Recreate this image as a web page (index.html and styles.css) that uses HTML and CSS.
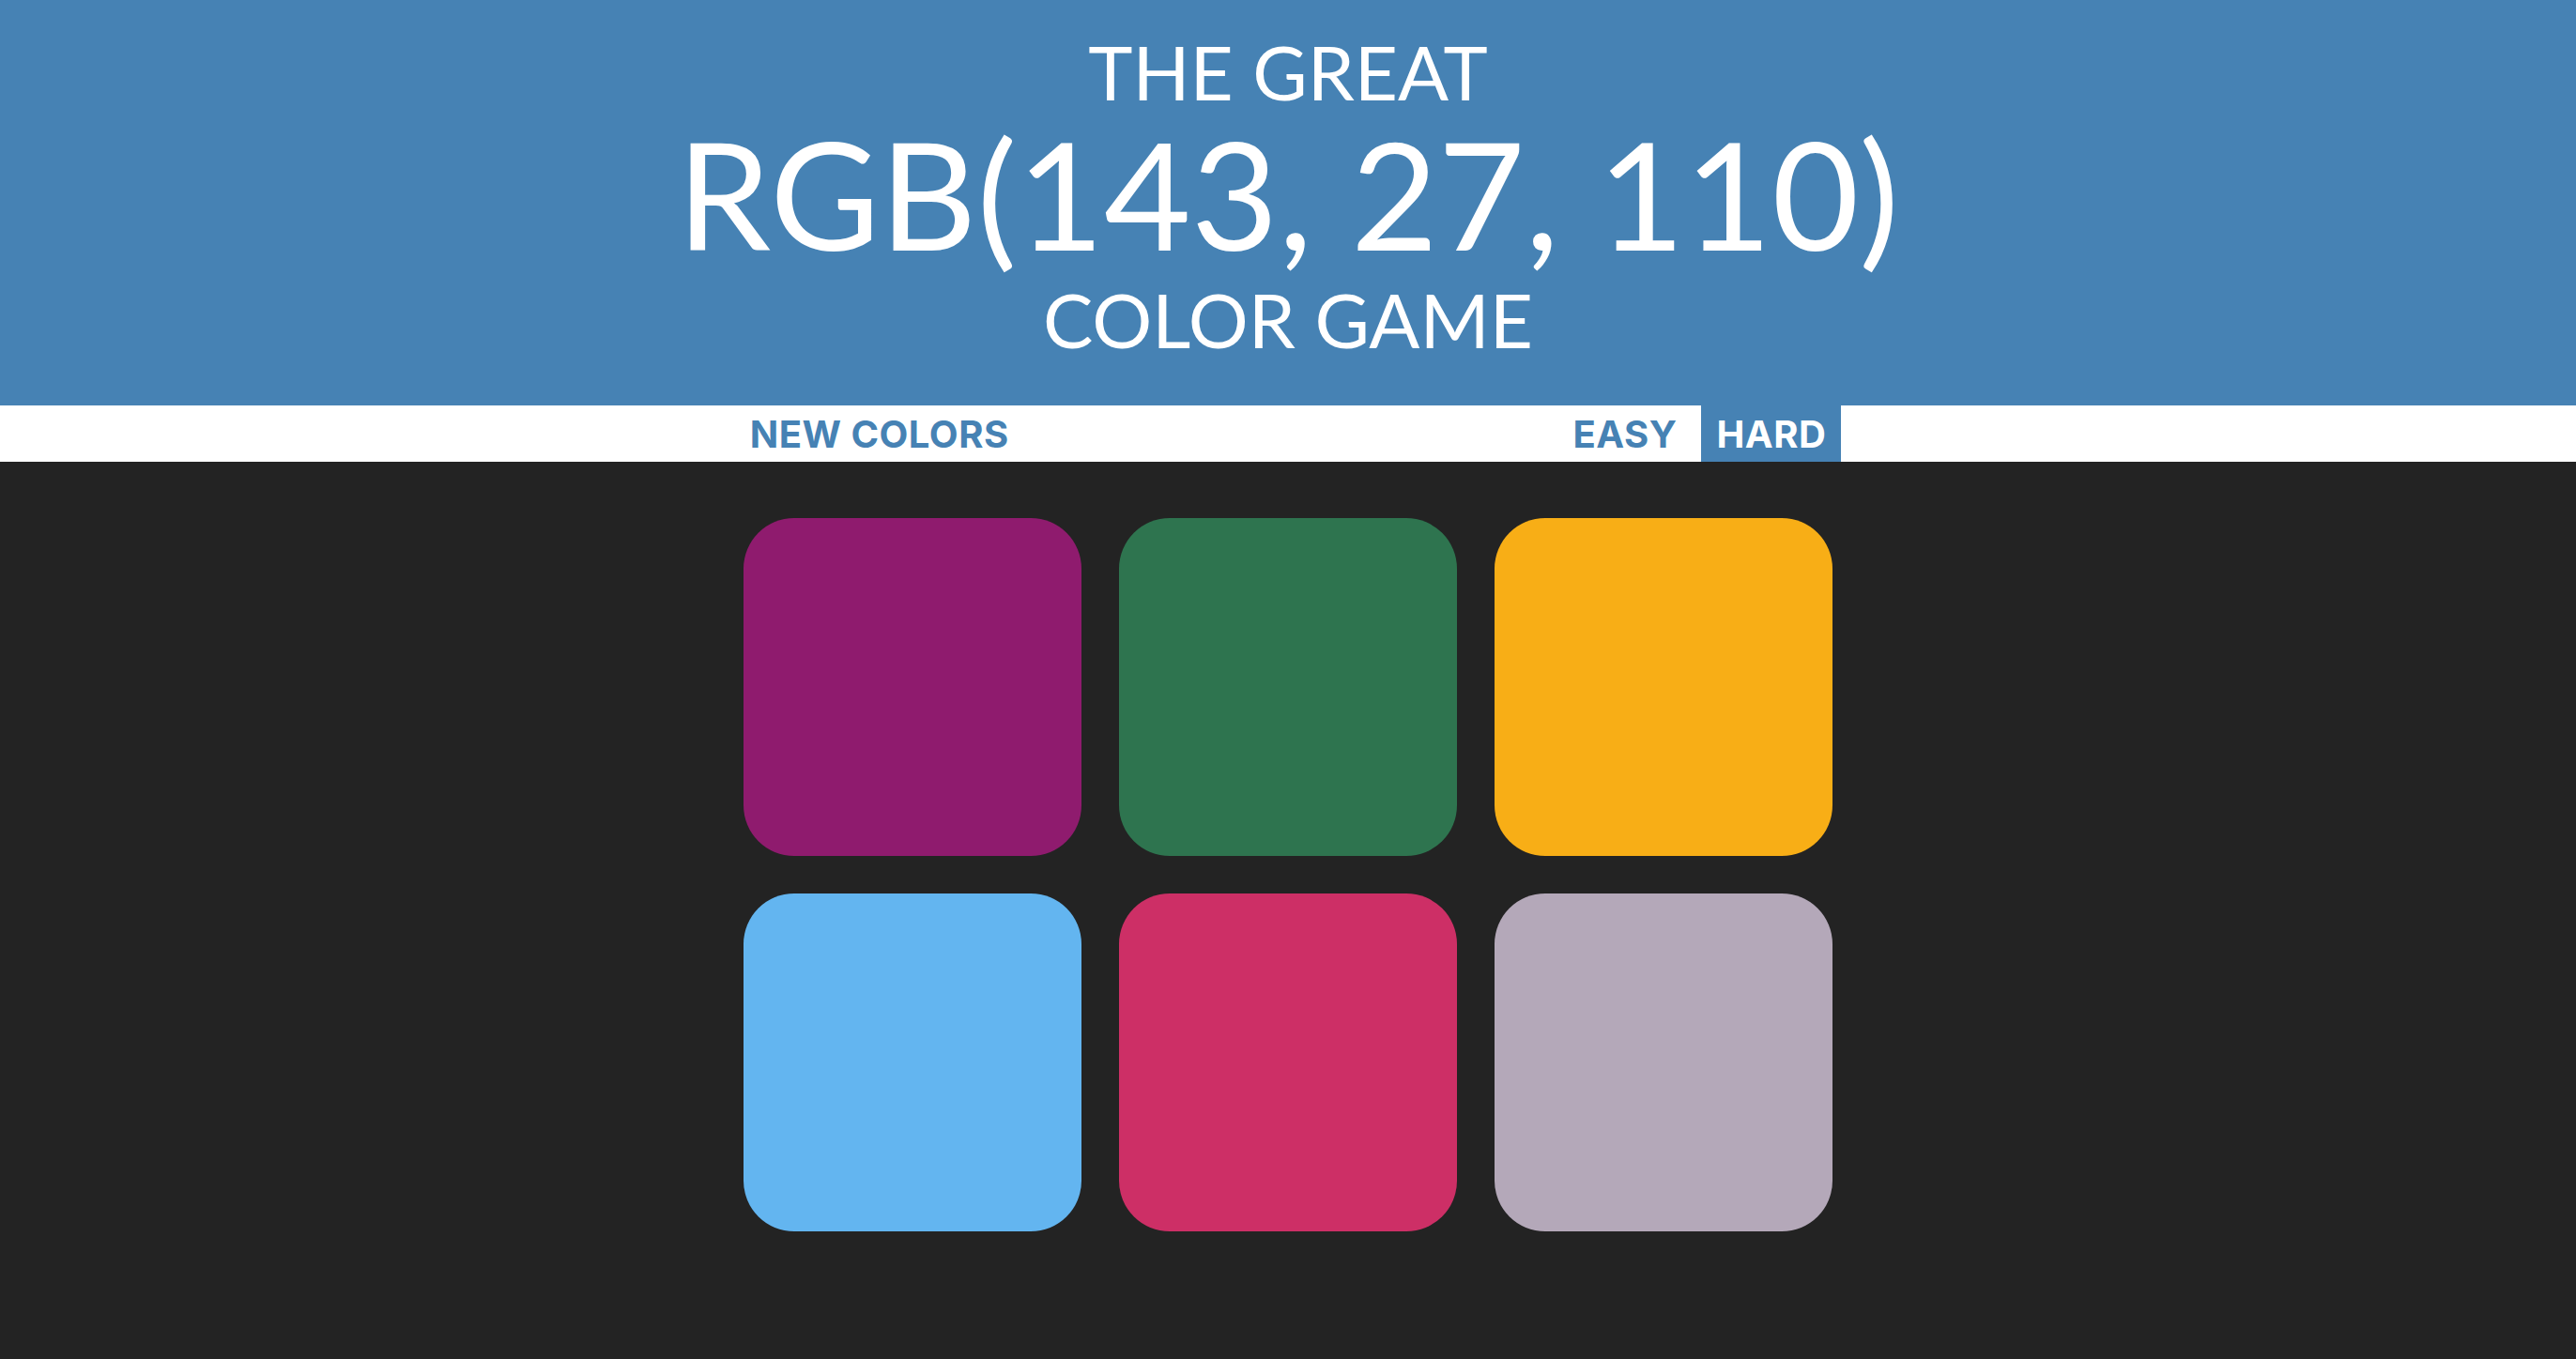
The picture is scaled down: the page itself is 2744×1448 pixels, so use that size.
FILE: index.html
```html
<!DOCTYPE html>
<html lang="en">
<head>
<meta charset="utf-8">
<title>Color Game</title>
<link rel="stylesheet" href="styles.css">
</head>
<body>
<h1 class="title">
  <span class="title-line">The Great</span>
  <span class="title-line color-display">RGB(143, 27, 110)</span>
  <span class="title-line">Color Game</span>
</h1>
<div class="stripe">
  <button class="btn">New Colors</button>
  <span class="message"></span>
  <button class="btn">Easy</button>
  <button class="btn selected">Hard</button>
</div>
<div class="container">
  <div class="square sq-purple"></div>
  <div class="square sq-green"></div>
  <div class="square sq-yellow"></div>
  <div class="square sq-blue"></div>
  <div class="square sq-pink"></div>
  <div class="square sq-lavender"></div>
</div>
</body>
</html>
```
FILE: styles.css
```css
html, body {
  margin: 0;
  padding: 0;
}
body {
  background: #232323;
  font-family: Lato, "Open Sans", sans-serif;
}
.title {
  margin: 0;
  padding: 32px 0 48px;
  background: #4682b4;
  color: #ffffff;
  text-align: center;
  text-transform: uppercase;
  font-weight: 400;
  font-size: 80px;
  line-height: 1.1;
}
.title-line {
  display: block;
  height: 88px;
  line-height: 88px;
  white-space: nowrap;
}
.title-line.color-display {
  font-size: 160px;
  height: 176px;
  line-height: 170px;
}
.stripe {
  height: 60px;
  background: #ffffff;
  display: flex;
  justify-content: center;
  align-items: stretch;
  gap: 10px;
}
.btn {
  border: none;
  background: none;
  margin: 0;
  padding: 0 16px;
  font-family: Inter, Lato, sans-serif;
  font-weight: 700;
  font-size: 40px;
  letter-spacing: 0.5px;
  text-transform: uppercase;
  color: #4682b4;
  height: 100%;
}
.btn.selected {
  background: #4682b4;
  color: #ffffff;
}
.message {
  width: 20%;
}
.container {
  width: 1200px;
  margin: 40px auto;
  display: flex;
  flex-wrap: wrap;
}
.square {
  width: 360px;
  height: 360px;
  margin: 20px;
  border-radius: 54px;
}
.sq-purple { background: #8f1b6e; }
.sq-green { background: #2e744f; }
.sq-yellow { background: #f8ae16; }
.sq-blue { background: #63b5f0; }
.sq-pink { background: #cd2f66; }
.sq-lavender { background: #b4a8b9; }
```
